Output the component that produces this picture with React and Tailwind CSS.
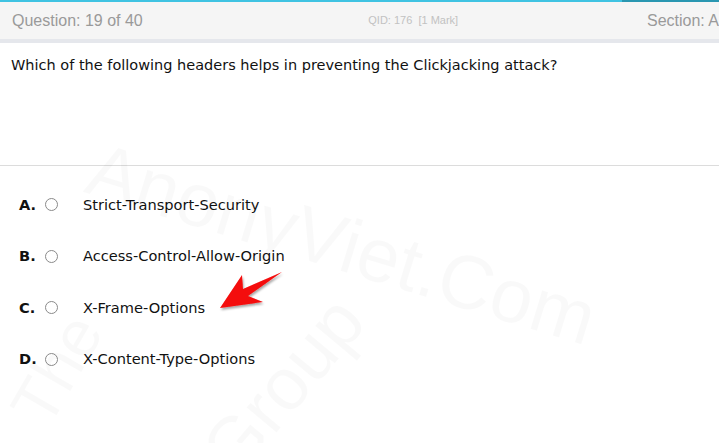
import React from "react";

const options = [
  { key: "A", text: "Strict-Transport-Security" },
  { key: "B", text: "Access-Control-Allow-Origin" },
  { key: "C", text: "X-Frame-Options" },
  { key: "D", text: "X-Content-Type-Options" },
];

export default function App() {
  return (
    <div className="relative w-[719px] h-[443px] overflow-hidden bg-white">
      {/* top progress line */}
      <div className="flex h-[2px]">
        <div className="w-[622px] bg-[#3fc3e2]" />
        <div className="flex-1 bg-[#2a97b1]" />
      </div>

      {/* header */}
      <div className="flex items-center h-[37px] bg-[#f5f5f5] font-['Liberation_Sans',Arial,sans-serif] whitespace-nowrap">
        <div className="pl-[12px] w-[370px] text-[16px] text-[#9a9a9a]">Question: 19 of 40</div>
        <div className="w-[280px] text-[11px] text-[#c2c2c2]">QID: 176 &nbsp;[1 Mark]</div>
        <div className="text-[16px] text-[#9a9a9a]">Section: A</div>
      </div>
      <div className="h-[4px] bg-[#e5e7ec]" />

      {/* question */}
      <div className="h-[123px] border-b border-[#dcdcdc] px-[11px] pt-[12px] font-['DejaVu_Sans',Verdana,sans-serif] text-[14.5px] text-[#111]">
        Which of the following headers helps in preventing the Clickjacking attack?
      </div>

      {/* options */}
      <div className="pt-[13px] font-['DejaVu_Sans',Verdana,sans-serif] text-[14.6px] text-[#111]">
        {options.map((o) => (
          <div key={o.key} className="flex items-center h-[51.5px]">
            <span className="w-[26px] pl-[19px] box-content font-bold">{o.key}.</span>
            <span className="w-[13px] h-[13px] rounded-full border border-[#8a8a8a] bg-white" />
            <span className="ml-[25px]">{o.text}</span>
          </div>
        ))}
      </div>

      {/* watermark */}
      <div className="pointer-events-none absolute inset-0 font-['Liberation_Sans',Arial,sans-serif] text-[#000]/[0.025] whitespace-nowrap">
        <div className="absolute left-[90px] top-[110px] text-[76px] rotate-[17deg] origin-left">AnonyViet.Com</div>
        <div className="absolute left-[0px] top-[320px] text-[66px] -rotate-[60deg]">The</div>
        <div className="absolute left-[180px] top-[330px] text-[74px] -rotate-[50deg]">Group</div>
      </div>

      {/* red arrow */}
      <svg className="absolute left-[214px] top-[266px]" width="72" height="50" viewBox="0 0 72 50">
        <defs>
          <filter id="sh" x="-20%" y="-20%" width="140%" height="140%">
            <feDropShadow dx="1" dy="2" stdDeviation="1.2" floodColor="#000" floodOpacity="0.35" />
          </filter>
        </defs>
        <path d="M6 42 L28 9 L29 23 L68 6 L34 30 L49 36 Z" fill="#f40a0a" filter="url(#sh)" />
      </svg>
    </div>
  );
}
